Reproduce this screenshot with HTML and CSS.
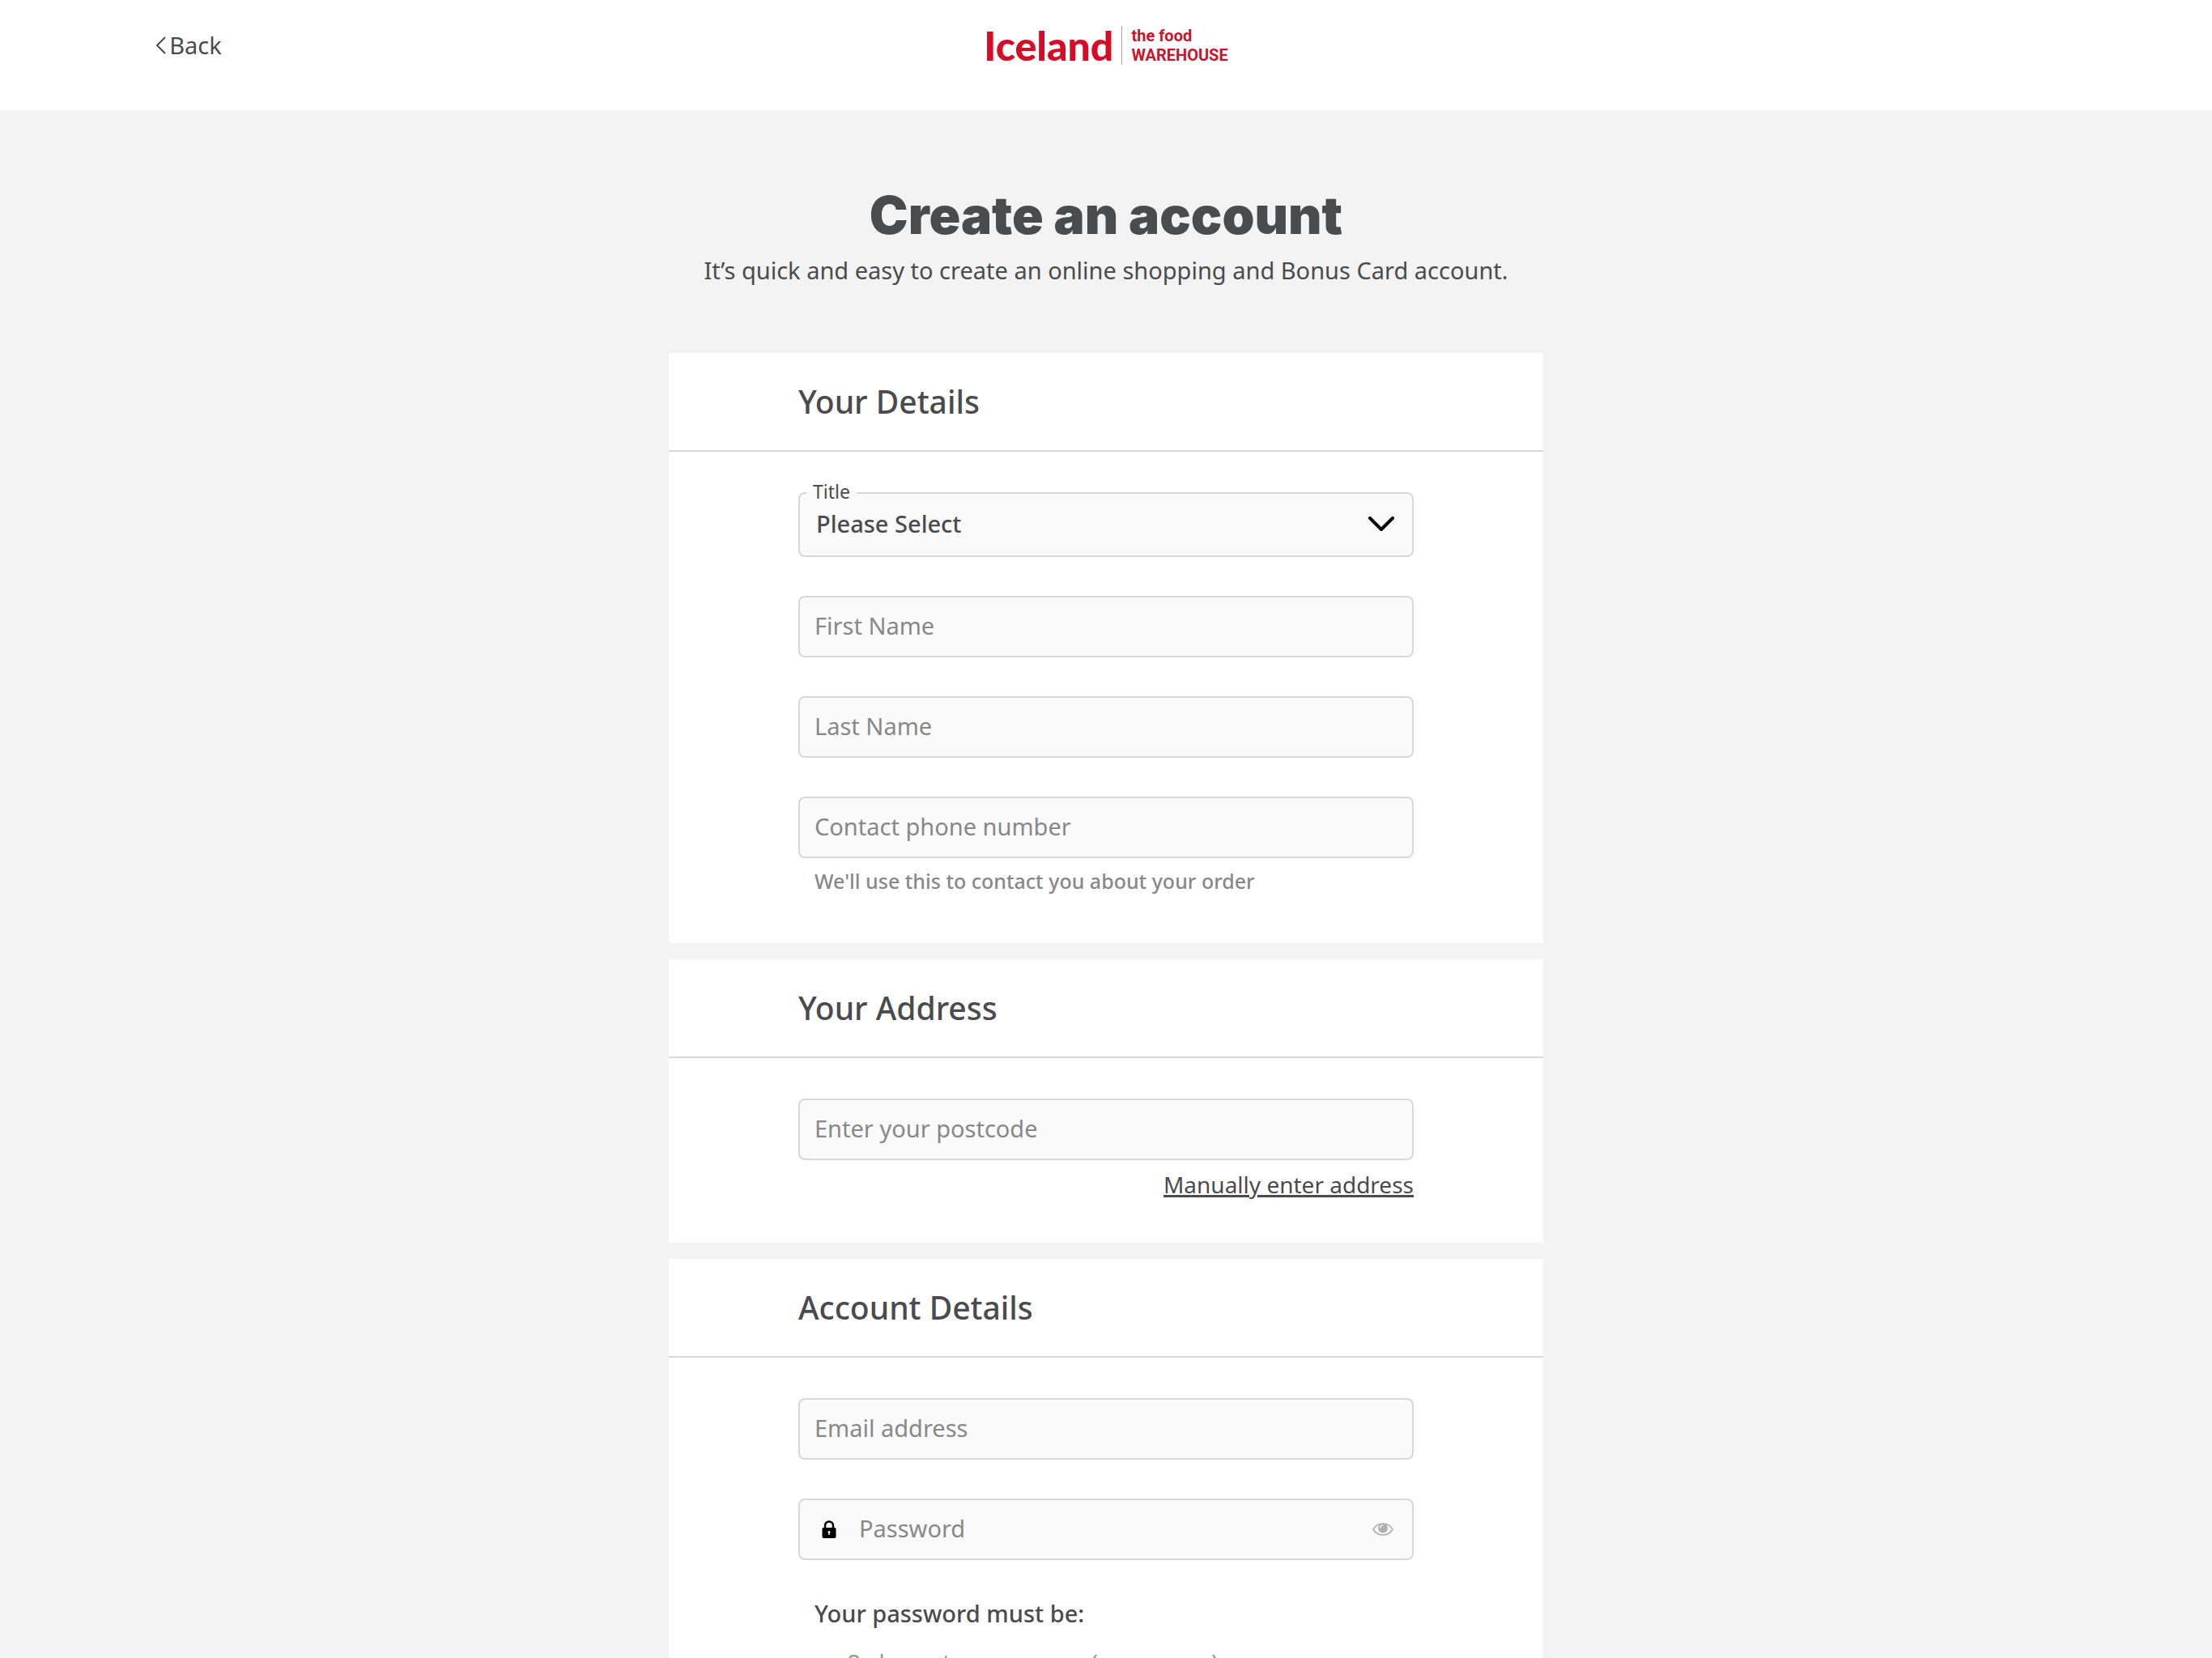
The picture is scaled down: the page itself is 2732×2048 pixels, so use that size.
FILE: index.html
```html
<!DOCTYPE html>
<html lang="en">
<head>
  <meta charset="utf-8">
  <meta name="viewport" content="width=device-width, initial-scale=1">
  <title>Create an account | Iceland</title>
  <link rel="stylesheet" href="styles.css">
</head>
<body>
  <header class="site-header">
    <a class="back" href="#">
      <svg class="back-icon" viewBox="0 0 14 22" aria-hidden="true"><path d="M12.500 1.500 3 11l9.500 9.500"/></svg>
      <span>Back</span>
    </a>
    <a class="logo" href="#" aria-label="Iceland, the food warehouse">
      <span class="logo-name">Iceland</span>
      <span class="logo-sub"><span>the food</span><span>WAREHOUSE</span></span>
    </a>
  </header>

  <main class="page">
    <div class="intro">
      <h1>Create an account</h1>
      <p>It’s quick and easy to create an online shopping and Bonus Card account.</p>
    </div>

    <form class="cards">
      <section class="card">
        <h2>Your Details</h2>
        <div class="card-body">
          <div class="fields">
            <div class="select-field">
              <label for="title">Title</label>
              <select id="title"><option>Please Select</option><option>Mr</option><option>Mrs</option><option>Miss</option><option>Ms</option></select>
              <svg class="chevron" viewBox="0 0 32 18" aria-hidden="true"><path d="M2 2l14 14L30 2"/></svg>
            </div>
            <input class="field" type="text" placeholder="First Name" aria-label="First Name">
            <input class="field" type="text" placeholder="Last Name" aria-label="Last Name">
            <input class="field" type="tel" placeholder="Contact phone number" aria-label="Contact phone number" aria-describedby="phone-hint">
          </div>
          <p class="hint" id="phone-hint">We'll use this to contact you about your order</p>
        </div>
      </section>

      <section class="card">
        <h2>Your Address</h2>
        <div class="card-body">
          <div class="fields">
            <input class="field" type="text" placeholder="Enter your postcode" aria-label="Enter your postcode">
          </div>
          <div class="manual"><a href="#">Manually enter address</a></div>
        </div>
      </section>

      <section class="card">
        <h2>Account Details</h2>
        <div class="card-body">
          <div class="fields">
            <input class="field" type="email" placeholder="Email address" aria-label="Email address">
            <div class="field password">
              <svg class="lock" viewBox="0 0 18 22" aria-hidden="true">
                <path d="M4 10V6.500a5 5 0 0 1 10 0V10" fill="none" stroke="#000" stroke-width="2.500"/>
                <path fill="#000" fill-rule="evenodd" d="M2 9h14a1.500 1.500 0 0 1 1.500 1.500v9.500a2 2 0 0 1-2 2h-13a2 2 0 0 1-2-2v-9.500A1.500 1.500 0 0 1 2 9zM9 13a1.600 1.600 0 0 0-1.600 1.600c0 .6.4 1 .9 1.300V18h1.400v-2.100c.5-.3.9-.7.9-1.300A1.600 1.600 0 0 0 9 13z"/>
              </svg>
              <input type="password" placeholder="Password" aria-label="Password">
              <button class="reveal" type="button" aria-label="Show password">
                <svg viewBox="0 0 26 16" aria-hidden="true">
                  <path d="M1 8c2.500-4.300 7-7 12-7s9.500 2.700 12 7c-2.500 4.300-7 7-12 7S3.500 12.300 1 8z" fill="none" stroke="#b0b0b0" stroke-width="1.600"/>
                  <circle cx="13" cy="6.500" r="6" fill="#b0b0b0"/>
                  <path d="M9.600 6.500c0-2 1.300-3.400 3.200-3.600" fill="none" stroke="#fafafa" stroke-width="1.200" stroke-linecap="round"/>
                </svg>
              </button>
            </div>
          </div>
          <div class="rules">
            <p>Your password must be:</p>
            <ul><li>8 characters or more (no spaces)</li></ul>
          </div>
        </div>
      </section>
    </form>
  </main>
</body>
</html>
```
FILE: styles.css
```css
* { box-sizing: border-box; }

body {
  margin: 0;
  background: #f3f3f3;
  color: #4a4b4d;
  font: 400 29px/44px "Noto Sans", sans-serif;
}

h1, h2, p, ul { margin: 0; }
svg { display: block; flex: none; }
a { color: inherit; }

/* Header */
.site-header {
  display: grid;
  grid-template-columns: 1fr auto 1fr;
  align-items: center;
  padding: 24px 7% 48px;
  background: #fff;
}

.back {
  display: flex;
  align-items: center;
  gap: 4px;
  width: max-content;
  text-decoration: none;
}

.back-icon {
  width: 14px;
  height: 22px;
  fill: none;
  stroke: #4a4b4d;
  stroke-width: 2;
  stroke-linecap: round;
  stroke-linejoin: round;
}

.logo {
  display: flex;
  align-items: center;
  gap: 10px;
  min-height: 64px;
  color: #d80b26;
  text-decoration: none;
}

.logo-name { font: 900 50px/48px Lato, sans-serif; }

.logo-sub {
  display: flex;
  flex-direction: column;
  padding-left: 11px;
  border-left: 1px solid #e58a95;
  color: #c8142c;
  font: 700 20px/24px Roboto, sans-serif;
}

/* Page */
.page {
  max-width: 1080px;
  margin: 0 auto;
  padding: 90px 0 80px;
}

.intro {
  display: grid;
  gap: 6px;
  margin-bottom: 80px;
  text-align: center;
}

.intro h1 { font: 900 64px/80px Inter, sans-serif; }

.cards { display: grid; gap: 20px; }
.card { background: #fff; }

.card h2 {
  padding: 32px 160px;
  border-bottom: 2px solid #d8d8d8;
  font-size: 39px;
  font-weight: 500;
  line-height: 56px;
}

.card-body { padding: 50px 160px; }
.fields { display: grid; gap: 48px; }

/* Form controls */
input, select, button { font: inherit; color: inherit; }
input { min-width: 0; }
input::placeholder { color: #888; opacity: 1; }

.field, select {
  width: 100%;
  height: 76px;
  padding: 0 18px 3px;
  border: 2px solid #d8d8d8;
  border-radius: 8px;
  background: #fafafa;
}

.select-field { position: relative; }

.select-field select {
  display: block;
  height: 80px;
  padding: 0 72px 2px 20px;
  appearance: none;
  font-weight: 500;
}

.select-field label {
  position: absolute;
  top: -13px;
  left: 10px;
  padding: 0 8px;
  background: linear-gradient(transparent 12px, #fafafa 12px);
  font-size: 23px;
  line-height: 24px;
}

.chevron {
  position: absolute;
  top: 30px;
  right: 24px;
  width: 32px;
  height: 18px;
  fill: none;
  stroke: #000;
  stroke-width: 4;
  stroke-linecap: round;
  stroke-linejoin: round;
  pointer-events: none;
}

.password {
  display: flex;
  align-items: center;
  padding: 0 23px 0 27px;
}

.password input {
  flex: 1;
  height: 100%;
  padding: 0 28px 3px;
  border: 0;
  background: none;
}

.lock { width: 18px; height: 22px; }

.reveal {
  padding: 0;
  border: 0;
  background: none;
}

.reveal svg { width: 26px; height: 16px; }

/* Supporting text */
.hint {
  margin: 8px 0 7px;
  padding: 0 20px;
  color: #888;
  font-size: 25px;
  font-weight: 500;
  line-height: 40px;
}

.manual {
  margin-top: 8px;
  font-size: 28px;
  text-align: right;
}

.manual a {
  text-decoration-thickness: 3px;
  text-underline-offset: 2px;
}

.rules {
  display: grid;
  gap: 18px;
  margin-top: 44px;
  padding: 0 20px;
}

.rules p { font-weight: 500; }

.rules ul {
  padding-left: 40px;
  color: #999;
  font-size: 30px;
  list-style: none;
}
```
